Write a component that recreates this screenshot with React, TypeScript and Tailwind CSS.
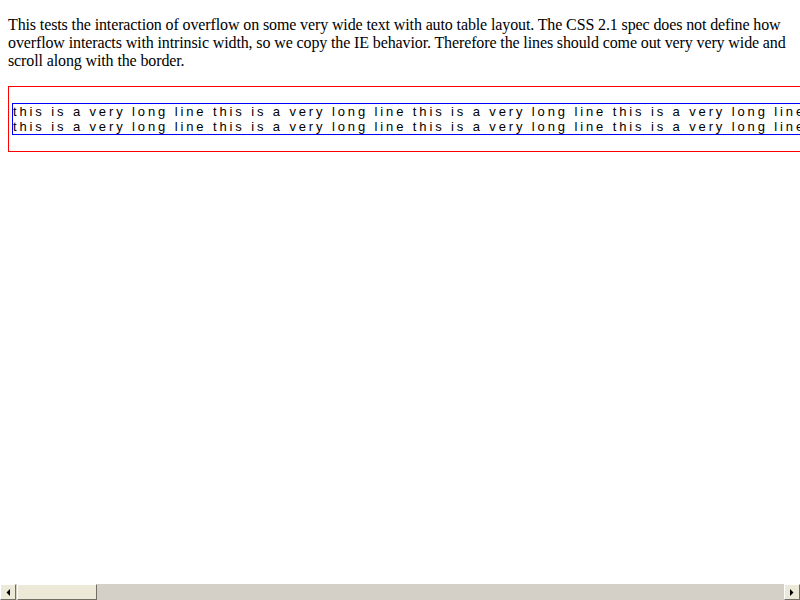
import React from "react";

const phrase = "this is a very long line ";
const line = phrase.repeat(12);

function Btn({ dir }: { dir: "left" | "right" }) {
  return (
    <div className="w-4 h-4 shrink-0 bg-[#ece9d8] border-t border-l border-t-[#ffffff] border-l-[#ffffff] border-b border-r border-b-[#716f64] border-r-[#716f64] flex items-center justify-center">
      <svg width="4" height="7" viewBox="0 0 4 7">
        {dir === "left" ? (
          <path d="M4 0 L4 7 L0.5 3.5 Z" fill="#000" />
        ) : (
          <path d="M0 0 L0 7 L3.5 3.5 Z" fill="#000" />
        )}
      </svg>
    </div>
  );
}

export default function App() {
  return (
    <div className="w-[800px] h-[600px] flex flex-col overflow-hidden bg-white text-black">
      <div className="flex-1 overflow-hidden pt-4 px-2">
        <p className="font-['Liberation_Serif',serif] text-[16px] leading-[18px] tracking-[-0.12px] whitespace-nowrap w-[784px]">
          This tests the interaction of overflow on some very wide text with auto table layout. The CSS 2.1 spec does not define how
          <br />
          overflow interacts with intrinsic width, so we copy the IE behavior. Therefore the lines should come out very very wide and
          <br />
          scroll along with the border.
        </p>
        <div className="mt-4 w-max border border-[#ff0000] pt-4 pb-4 pl-[3px] pr-[3px]">
          <div className="border border-[#0000ff] font-['Liberation_Sans',Arial,sans-serif] text-[13px] leading-[15px] tracking-[2.88px] whitespace-nowrap">
            <div>{line}</div>
            <div>{line}</div>
          </div>
        </div>
      </div>
      <div className="h-4 shrink-0 flex bg-[#d4d0c8]">
        <Btn dir="left" />
        <div className="w-[80px] h-4 ml-px bg-[#ece9d8] border-t border-l border-t-[#ffffff] border-l-[#ffffff] border-b border-r border-b-[#716f64] border-r-[#716f64]" />
        <div className="flex-1" />
        <Btn dir="right" />
      </div>
    </div>
  );
}
